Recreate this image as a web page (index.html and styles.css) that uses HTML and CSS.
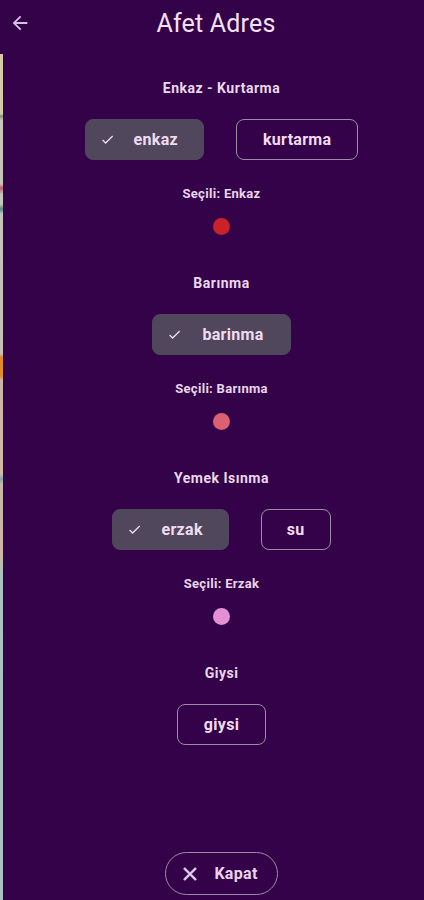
FILE: index.html
```html
<!DOCTYPE html>
<html lang="tr">
<head>
<meta charset="utf-8">
<title>Afet Adres</title>
<link rel="stylesheet" href="styles.css">
</head>
<body>
<div class="screen">
  <header class="appbar">
    <button class="back" aria-label="Geri">
      <svg viewBox="0 0 24 24" width="22" height="22"><path d="M20 11H7.83l5.59-5.59L12 4l-8 8 8 8 1.41-1.41L7.83 13H20v-2z" fill="currentColor"/></svg>
    </button>
    <h1 class="title">Afet Adres</h1>
    <span></span>
  </header>
  <div class="body">
    <div class="edge"></div>
    <main class="content">
      <section class="group">
        <div class="label">Enkaz - Kurtarma</div>
        <div class="chips">
          <button class="chip selected"><svg class="check" viewBox="0 0 24 24"><path d="M9 16.17L4.83 12l-1.42 1.41L9 19 21 7l-1.41-1.41z" fill="currentColor"/></svg>enkaz</button>
          <button class="chip">kurtarma</button>
        </div>
        <div class="sel">Seçili: Enkaz</div>
        <span class="dot dot-red"></span>
      </section>
      <section class="group">
        <div class="label">Barınma</div>
        <div class="chips">
          <button class="chip selected wide"><svg class="check" viewBox="0 0 24 24"><path d="M9 16.17L4.83 12l-1.42 1.41L9 19 21 7l-1.41-1.41z" fill="currentColor"/></svg>barinma</button>
        </div>
        <div class="sel">Seçili: Barınma</div>
        <span class="dot dot-rose"></span>
      </section>
      <section class="group">
        <div class="label">Yemek Isınma</div>
        <div class="chips">
          <button class="chip selected"><svg class="check" viewBox="0 0 24 24"><path d="M9 16.17L4.83 12l-1.42 1.41L9 19 21 7l-1.41-1.41z" fill="currentColor"/></svg>erzak</button>
          <button class="chip narrow">su</button>
        </div>
        <div class="sel">Seçili: Erzak</div>
        <span class="dot dot-pink"></span>
      </section>
      <section class="group">
        <div class="label">Giysi</div>
        <div class="chips">
          <button class="chip">giysi</button>
        </div>
      </section>
      <button class="close">
        <svg viewBox="0 0 24 24" width="22" height="22"><path d="M19 6.41L17.59 5 12 10.59 6.41 5 5 6.41 10.59 12 5 17.59 6.41 19 12 13.41 17.59 19 19 17.59 13.41 12z" fill="currentColor" stroke="currentColor" stroke-width="0.8"/></svg>
        Kapat
      </button>
    </main>
  </div>
</div>
</body>
</html>
```
FILE: styles.css
```css
* { box-sizing: border-box; }
html, body { margin: 0; padding: 0; }
body {
  background: #340248;
  font-family: Roboto, "Noto Sans", "DejaVu Sans", sans-serif;
  color: #ecdcef;
}
.screen {
  width: 424px;
  height: 900px;
  display: flex;
  flex-direction: column;
  overflow: hidden;
}
.appbar {
  height: 46px;
  flex: none;
  display: grid;
  grid-template-columns: 44px 1fr 36px;
  align-items: center;
}
.back {
  background: none;
  border: 0;
  padding: 0 0 0 9px;
  color: #d6c0e6;
  display: flex;
  align-items: center;
  height: 46px;
}
.title {
  margin: 0;
  text-align: center;
  font-size: 25px;
  font-weight: 400;
  color: #f2e0f5;
  letter-spacing: 0.2px;
}
.body {
  flex: 1;
  display: flex;
  min-height: 0;
}
.edge {
  width: 3px;
  flex: none;
  margin-top: 8px;
  background: linear-gradient(to bottom,
    #d9c9a6 0px, #d6c8a8 60px, #7d8c7a 62px, #c9c8b8 66px,
    #c8c2b8 130px, #c2566a 134px, #c8c6bc 140px,
    #c9c6bb 150px, #4f8d84 155px, #c6c4bb 160px,
    #c8c0b6 300px, #e08a2a 303px, #e3892a 322px, #c8b6a8 326px,
    #d4b8a6 420px, #7fa8a4 425px, #c7b6aa 430px,
    #cdb7a8 500px, #a9c1c0 520px, #a8c2c3 854px);
}
.content {
  flex: 1;
  display: flex;
  flex-direction: column;
  align-items: center;
  padding: 34px 0 5px 16px;
}
.group {
  display: flex;
  flex-direction: column;
  align-items: center;
  margin-bottom: 40px;
}
.label {
  font-size: 14px;
  font-weight: 700;
  line-height: 16px;
  letter-spacing: 0.5px;
  color: #ead8ee;
}
.chips {
  display: flex;
  gap: 32px;
  margin-top: 23px;
}
.chip {
  height: 41px;
  padding: 0 26px;
  border-radius: 8px;
  border: 1.5px solid #9e8aa6;
  background: transparent;
  color: #f0dcf2;
  font-family: inherit;
  font-size: 16px;
  font-weight: 700;
  letter-spacing: 0.3px;
  display: flex;
  align-items: center;
}
.chip.narrow { padding: 0 25px; }
.chip.selected {
  background: #51475c;
  border-color: #51475c;
  padding: 0 25px 0 14px;
}
.chip.selected.erzak { padding: 0 24px 0 13px; }
.chip.selected.wide { padding: 0 26px 0 14px; }
.check {
  width: 15px;
  height: 15px;
  color: #e8dcec;
  margin-right: 19px;
}
.chip.wide .check { margin-right: 20px; }
.sel {
  margin-top: 26px;
  font-size: 13px;
  font-weight: 700;
  line-height: 16px;
  letter-spacing: 0.3px;
  color: #e8d6ec;
}
.dot {
  width: 17px;
  height: 17px;
  border-radius: 50%;
  margin-top: 16px;
}
.dot-red { background: #cb2129; }
.dot-rose { background: #db6072; }
.dot-pink { background: #e590d5; }
.close {
  margin-top: auto;
  width: 113px;
  height: 43px;
  border-radius: 22px;
  border: 1.5px solid #9e8aa6;
  background: transparent;
  color: #e8d2f0;
  font-family: inherit;
  font-size: 16px;
  font-weight: 700;
  letter-spacing: 0.3px;
  display: flex;
  align-items: center;
  justify-content: center;
  gap: 13px;
  padding: 0 6px 0 0;
}
.close svg { color: #e0d2ee; }
```
